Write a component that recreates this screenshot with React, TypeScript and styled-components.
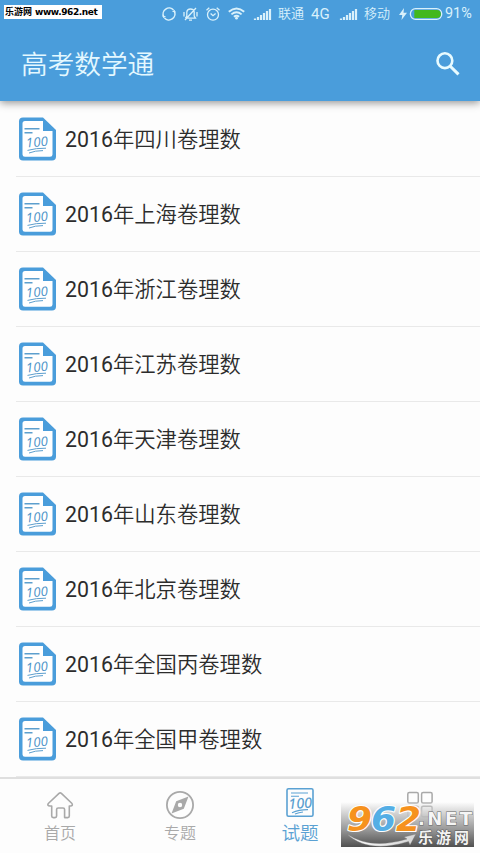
import React from 'react';
import styled, { createGlobalStyle } from 'styled-components';

const BLUE = '#4a9ddb';
const PALE = '#d9f1fb';

const GlobalStyle = createGlobalStyle`
  * { box-sizing: border-box; }
  body { margin: 0; background: #fdfdfd; font-family: Roboto, "Noto Sans CJK SC DemiLight", "Noto Sans CJK SC", sans-serif; }
  svg { display: block; overflow: visible; }
`;

const Screen = styled.div`
  position: relative;
  display: flex;
  flex-direction: column;
  width: 480px;
  height: 853px;
  overflow: hidden;
  background: #fdfdfd;
`;

const Header = styled.header`
  position: relative;
  z-index: 1;
  flex: none;
  height: 101px;
  background: ${BLUE};
  box-shadow: 0 2px 8px rgba(0, 0, 0, 0.42);
`;

const StatusBar = styled.div`
  display: grid;
  grid-template-columns: 21px 23px 22px 26px 24px 33px 29px 24px 35px 12px 34px 1fr;
  align-items: center;
  height: 27px;
  padding-left: 162px;
  color: ${PALE};
  white-space: nowrap;
`;

const StatusText = styled.span<{ $size: number }>`
  font-size: ${(p) => p.$size}px;
  line-height: 20px;
  height: 20px;
  margin-top: 1px;
`;

const Toolbar = styled.div`
  display: flex;
  align-items: center;
  justify-content: space-between;
  height: 74px;
  padding: 0 20px 0 21px;
`;

const Title = styled.h1`
  margin: 2px 0 0;
  font-size: 26.67px;
  line-height: 40px;
  font-weight: 400;
  color: #e4f8ff;
`;

const SourceTag = styled.div`
  position: absolute;
  z-index: 3;
  left: 4px;
  top: 5px;
  display: flex;
  align-items: center;
  gap: 3px;
  width: 98px;
  height: 14px;
  padding-left: 1px;
  background: #fff;
  color: #000;
  white-space: nowrap;
  font: bold 9px/14px "Noto Sans CJK SC", sans-serif;
`;

const SourceUrl = styled.span`
  font: bold 9px/14px "DejaVu Sans", sans-serif;
  letter-spacing: -0.4px;
`;

const List = styled.ul`
  flex: 1;
  margin: 0;
  padding: 1px 0 0;
  list-style: none;
  overflow: hidden;
`;

const Row = styled.li`
  display: flex;
  align-items: center;
  height: 75px;
  margin-left: 16px;
  padding-left: 2px;
  border-bottom: 1px solid #e9e9e9;
`;

const RowLabel = styled.span`
  margin-left: 9px;
  padding-top: 2px;
  font-size: 21.33px;
  line-height: 32px;
  color: #2c2c2c;
  white-space: nowrap;
`;

const TabBar = styled.nav`
  display: grid;
  grid-template-columns: repeat(4, 120px);
  flex: none;
  height: 76px;
  border-top: 2px solid #dfdfdf;
  background: #fdfdfd;
`;

const Tab = styled.div<{ $active?: boolean }>`
  display: flex;
  flex-direction: column;
  align-items: center;
  padding-top: ${(p) => (p.$active ? 9 : 12)}px;
  color: ${(p) => (p.$active ? '#5aa1d3' : '#a9a9a9')};
`;

const TabLabel = styled.span<{ $active?: boolean }>`
  margin-top: ${(p) => (p.$active ? 4 : 3)}px;
  font-size: ${(p) => (p.$active ? 18.6 : 16)}px;
  line-height: ${(p) => (p.$active ? 26 : 24)}px;
`;

const Watermark = styled.div`
  position: absolute;
  left: 341px;
  top: 802px;
  width: 133px;
  height: 45px;
  background: linear-gradient(rgba(255,255,255,.1), rgba(205,205,205,.85) 24%, rgba(145,145,145,.95) 62%, #505050);
`;

const PaperIcon = () => (
  <svg width="38" height="44" viewBox="0 0 38 44">
    <path d="M5 0.5H25L38 13V39.5Q38 43.5 34 43.5H5Q1 43.5 1 39.5V4.5Q1 0.5 5 0.5Z" fill={BLUE} />
    <path d="M7 4H25V14H34.5V37.5Q34.5 39.8 32 39.8H7Q4.5 39.8 4.5 37.5V6.5Q4.5 4 7 4Z" fill="#fff" />
    <path d="M6.5 11.8H21.5M6.5 15.8H14.5" stroke="#5d9fce" strokeWidth="1.5" />
    <text x="8" y="29.7" fontFamily="Open Sans" fontStyle="italic" fontSize="13" textLength="22" fill="#4b92c7" transform="rotate(-5 18 27)">100</text>
    <path d="M9.5 33.4Q18 31 28 31.2M11 36Q17 33.6 25 33.6" fill="none" stroke="#5d9fce" strokeWidth="1" />
  </svg>
);

const SyncIcon = () => (
  <svg width="14" height="14" viewBox="0 0 14 14" fill="none" stroke={PALE} strokeWidth="1.5">
    <path d="M1.6 9.5A6 6 0 0 1 11.5 3M12.4 4.5A6 6 0 0 1 2.5 11" />
    <path d="M0 8.4L1.6 11.2L4 9.3ZM14 5.6L12.4 2.8L10 4.7Z" fill={PALE} stroke="none" />
  </svg>
);

const MuteIcon = () => (
  <svg width="15" height="14" viewBox="0 0 15 14" fill="none" stroke={PALE} strokeWidth="1.3">
    <path d="M2.5 11.2H12.5L11.2 9V5Q10.8 2 7.5 2T3.8 5V9L2.5 11.2M6 13.2H9M1 5V9.5M14 5V9.5M2 13L13 1" />
  </svg>
);

const AlarmIcon = () => (
  <svg width="14" height="14" viewBox="0 0 14 14" fill="none" stroke={PALE} strokeWidth="1.3">
    <circle cx="7" cy="7.7" r="5.5" />
    <path d="M4.6 6.5L7 8.7L9.6 6.5M.5 3.3L3.3 .7M10.7 .7L13.5 3.3" />
  </svg>
);

const WifiIcon = () => (
  <svg width="17" height="13" viewBox="0 0 17 13" fill="none" stroke={PALE} strokeWidth="1.9">
    <path d="M.8 4.8Q8.5 -2 16.2 4.8M3.4 7.4Q8.5 3 13.6 7.4M5.9 9.7Q8.5 7.7 11.1 9.7" />
    <circle cx="8.5" cy="11.2" r="1.4" fill={PALE} stroke="none" />
  </svg>
);

const SignalIcon = () => (
  <svg width="17" height="12" viewBox="0 0 17 12" stroke={PALE} strokeWidth="2.2">
    <path d="M1 12V10.5M4 12V9M7 12V7M10 12V5M13 12V3M16 12V1" />
  </svg>
);

const BoltIcon = () => (
  <svg width="8" height="12" viewBox="0 0 8 12" fill={PALE}>
    <path d="M5 0L0 7H3.3L2.5 12L8 4.8H4.5Z" />
  </svg>
);

const BatteryIcon = () => (
  <svg width="32" height="12" viewBox="0 0 32 12">
    <rect x="-.6" y=".6" width="31.3" height="10.8" rx="5.2" fill="none" stroke={PALE} strokeWidth="1.3" />
    <path d="M3.3 2H25.8A4 4 0 0 1 25.8 10H3.3Z" fill="#43b81d" />
  </svg>
);

const SearchIcon = () => (
  <svg width="24" height="24" viewBox="0 0 24 24" fill="none" stroke="#e8fbff">
    <circle cx="8.9" cy="8.7" r="7.4" strokeWidth="2.6" />
    <path d="M14 14L22.5 22.3" strokeWidth="3.1" />
  </svg>
);

const HomeIcon = () => (
  <svg width="28" height="28" viewBox="0 0 28 28" fill="none" stroke="#a9a9a9" strokeWidth="1.6" strokeLinejoin="round">
    <path d="M13 2.3Q14.2 1.3 15.4 2.3L26 12.5Q27.2 14.8 24.5 15H23.3V25Q23.3 26.6 21.8 26.6H18.6V18.5Q18.6 17 17 17H12.2Q10.6 17 10.6 18.5V25Q10.6 26.6 9 26.6H7.3Q5.7 26.6 5.7 25V15H4Q.8 14.8 2.3 12.5Z" />
  </svg>
);

const CompassIcon = () => (
  <svg width="28" height="28" viewBox="0 0 28 28">
    <circle cx="14" cy="14" r="13.1" fill="none" stroke="#a9a9a9" strokeWidth="1.8" />
    <path fillRule="evenodd" d="M22.5 5.5L17.8 17.8L5.5 22.5L10.2 10.2ZM14 11.8A2.2 2.2 0 1 0 14 16.2A2.2 2.2 0 1 0 14 11.8" fill="#a9a9a9" />
  </svg>
);

const ExamIcon = () => (
  <svg width="28" height="29" viewBox="0 0 28 29" fill="none" stroke="#5aa1d3">
    <rect x="1" y=".8" width="26" height="27.4" rx="1.5" strokeWidth="1.6" />
    <path d="M5 5H22M5 8.3H13M6 24.8Q13 21.5 22 21.6M9 26Q13 24.3 17 24" strokeWidth="1.1" />
    <text x="2.6" y="20.3" fontFamily="Open Sans" fontStyle="italic" fontSize="14" textLength="23.5" fill="#4b95ca" strokeWidth=".2" transform="rotate(-4 14 17)">100</text>
  </svg>
);

const GridIcon = () => (
  <svg width="28" height="28" viewBox="0 0 28 28" fill="none" stroke="#a9a9a9" strokeWidth="1.5">
    <rect x="1.8" y="1.5" width="10.5" height="10.5" rx="1.5" />
    <rect x="15.6" y="1.5" width="10.5" height="10.5" rx="1.5" />
    <rect x="1.8" y="15.3" width="10.5" height="10.5" rx="1.5" />
    <rect x="15.6" y="15.3" width="10.5" height="10.5" rx="1.5" />
  </svg>
);

const WatermarkLogo = () => (
  <svg width="133" height="45" viewBox="0 0 133 45">
    <defs>
      <linearGradient id="swoosh" x1="0" x2="1">
        <stop offset="0" stopColor="#fff" />
        <stop offset="1" stopColor="#d5d5d5" />
      </linearGradient>
    </defs>
    <g fontFamily="DejaVu Sans" fontWeight="bold" fontStyle="italic" fontSize="33" stroke="#fff" strokeWidth="2.2" paintOrder="stroke" strokeLinejoin="round">
      <text x="6" y="29.3" textLength="25" lengthAdjust="spacingAndGlyphs" fill="#f6921e" strokeLinecap="round">9</text>
      <text x="30" y="29.3" textLength="25" lengthAdjust="spacingAndGlyphs" fill="#54aee5">6</text>
      <text x="55" y="29.3" textLength="25" lengthAdjust="spacingAndGlyphs" fill="#f6921e">2</text>
    </g>
    <path d="M6 32Q29 48 66 37L63 35L75 32L69 43L67.5 39.5Q27 52 6 32Z" fill="url(#swoosh)" stroke="#777" strokeWidth=".4" />
    <text x="77" y="23.4" fontFamily="DejaVu Sans" fontWeight="bold" fontSize="18" textLength="54" fill="#f5f5f5" stroke="#666" strokeWidth="1" paintOrder="stroke">.NET</text>
    <text x="77" y="41" fontFamily="Noto Sans CJK SC" fontWeight="bold" fontSize="15" textLength="51" fill="#f3f3f3" stroke="#555" strokeWidth="1" paintOrder="stroke">乐游网</text>
  </svg>
);

const papers = ['四川', '上海', '浙江', '江苏', '天津', '山东', '北京', '全国丙', '全国甲'];

const tabs = [
  { label: '首页', Icon: HomeIcon },
  { label: '专题', Icon: CompassIcon },
  { label: '试题', Icon: ExamIcon, active: true },
  { label: '', Icon: GridIcon },
];

export default function App() {
  return (
    <Screen>
      <GlobalStyle />
      <Header>
        <StatusBar>
          <SyncIcon />
          <MuteIcon />
          <AlarmIcon />
          <WifiIcon />
          <SignalIcon />
          <StatusText $size={13}>联通</StatusText>
          <StatusText $size={15}>4G</StatusText>
          <SignalIcon />
          <StatusText $size={13}>移动</StatusText>
          <BoltIcon />
          <BatteryIcon />
          <StatusText $size={14.4}>91%</StatusText>
        </StatusBar>
        <Toolbar>
          <Title>高考数学通</Title>
          <SearchIcon />
        </Toolbar>
      </Header>
      <List>
        {papers.map((name) => (
          <Row key={name}>
            <PaperIcon />
            <RowLabel>2016年{name}卷理数</RowLabel>
          </Row>
        ))}
      </List>
      <TabBar>
        {tabs.map(({ label, Icon, active }, i) => (
          <Tab key={i} $active={active}>
            <Icon />
            {label && <TabLabel $active={active}>{label}</TabLabel>}
          </Tab>
        ))}
      </TabBar>
      <SourceTag>
        乐游网<SourceUrl>www.962.net</SourceUrl>
      </SourceTag>
      <Watermark>
        <WatermarkLogo />
      </Watermark>
    </Screen>
  );
}
